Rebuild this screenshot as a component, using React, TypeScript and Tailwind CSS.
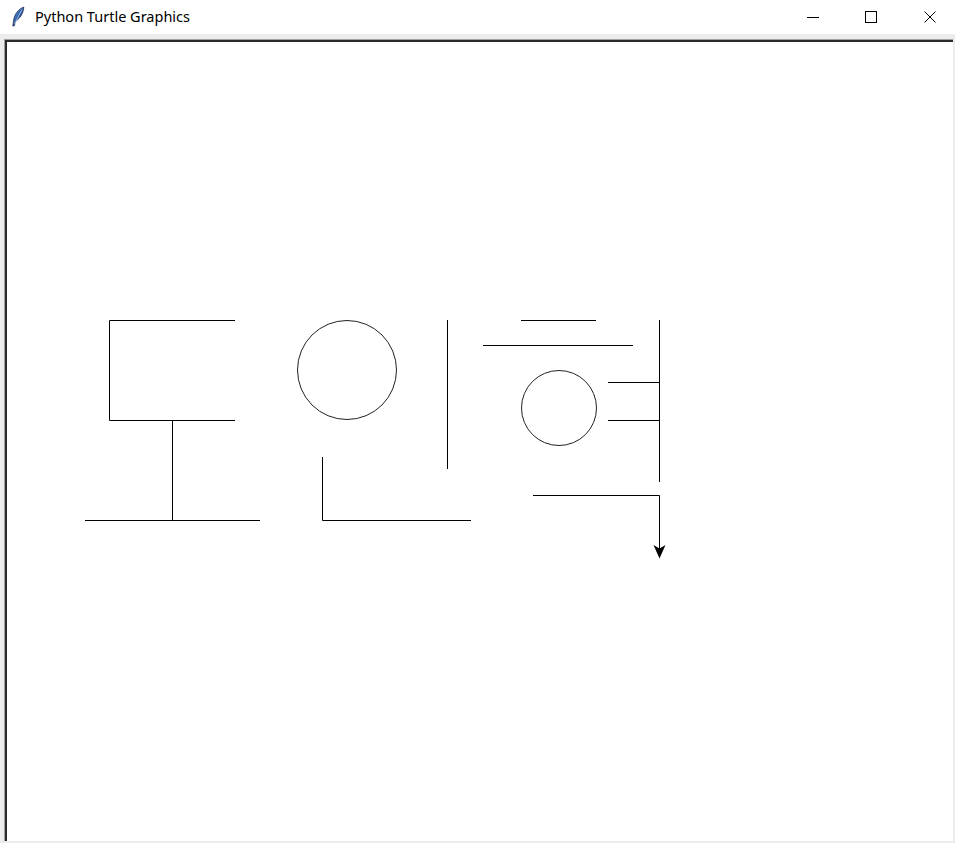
import React from "react";

function Feather() {
  return (
    <svg width="14" height="22" viewBox="0 0 14 22" className="block">
      <defs>
        <linearGradient id="quill" x1="0" y1="0" x2="1" y2="1">
          <stop offset="0" stopColor="#7fa6e0" />
          <stop offset="0.5" stopColor="#2f5ea8" />
          <stop offset="1" stopColor="#17305e" />
        </linearGradient>
      </defs>
      <path d="M12.8 1 C7.5 3 3.5 8 2.6 14 L1.8 20 L3.2 20 L4.6 15.2 C9.5 12 12.5 7 12.8 1 Z" fill="url(#quill)" stroke="#1a2b50" strokeWidth="0.7" />
      <path d="M11 3.5 L3.5 18" stroke="#c9dcf5" strokeWidth="0.7" />
    </svg>
  );
}

function TitleBar() {
  return (
    <div className="h-[34px] flex items-center bg-white">
      <div className="ml-[11px] w-[14px] flex items-center">
        <Feather />
      </div>
      <span className="ml-[10px] text-[14.5px] text-black font-['Segoe_UI','Noto_Sans',sans-serif]">Python Turtle Graphics</span>
      <div className="ml-auto flex items-center mr-[19px]">
        <div className="w-[12px] h-[12px] flex items-center">
          <div className="w-[12px] h-px bg-black" />
        </div>
        <div className="ml-[46px] w-[12px] h-[12px] border border-black" />
        <svg className="ml-[47px] block" width="12" height="12" viewBox="0 0 12 12">
          <path d="M0.5 0.5 L11.5 11.5 M11.5 0.5 L0.5 11.5" stroke="#000" strokeWidth="1" />
        </svg>
      </div>
    </div>
  );
}

function Drawing() {
  const line = { stroke: "#000", strokeWidth: 1, fill: "none" } as const;
  return (
    <svg width="946" height="799" viewBox="7 42 946 799" className="block">
      {/* 도 */}
      <path d="M235 320.5 H109.5 V420.5 H235" {...line} />
      <path d="M172.5 420.5 V520.5" {...line} />
      <path d="M85 520.5 H260" {...line} />
      {/* 인 */}
      <circle cx="347" cy="370" r="49.5" {...line} stroke="#222" />
      <path d="M447.5 320 V469" {...line} />
      <path d="M322.5 457 V520.5 H471" {...line} />
      {/* 혁 */}
      <path d="M521 320.5 H596" {...line} />
      <path d="M483 345.5 H633" {...line} />
      <circle cx="559" cy="408" r="37.5" {...line} stroke="#222" />
      <path d="M659.5 320 V482" {...line} />
      <path d="M608 382.5 H659.5" {...line} />
      <path d="M608 420.5 H659.5" {...line} />
      <path d="M533 495.5 H659.5 V550" {...line} />
      <polygon points="659.5,558.5 653.5,545 659.5,548.5 665.5,545" fill="#000" />
    </svg>
  );
}

export default function App() {
  return (
    <div className="w-[955px] h-[843px] bg-white flex flex-col overflow-hidden">
      <TitleBar />
      <div className="flex-1 bg-[#ececec] pt-[5px] pl-[4px] pr-[2px] pb-[2px] flex">
        <div className="flex-1 border-t border-l border-[#a0a0a0] flex">
          <div className="flex-1 border-t-2 border-l-2 border-[#2a2a2a] bg-white overflow-hidden">
            <Drawing />
          </div>
        </div>
      </div>
    </div>
  );
}
